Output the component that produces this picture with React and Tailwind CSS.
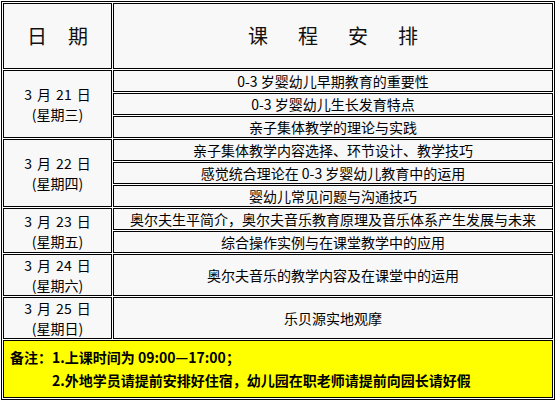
const groups = [
  {
    day: '21',
    week: '(星期三)',
    items: ['0-3 岁婴幼儿早期教育的重要性', '0-3 岁婴幼儿生长发育特点', '亲子集体教学的理论与实践'],
    h: 'h-[22px]',
  },
  {
    day: '22',
    week: '(星期四)',
    items: ['亲子集体教学内容选择、环节设计、教学技巧', '感觉统合理论在 0-3 岁婴幼儿教育中的运用', '婴幼儿常见问题与沟通技巧'],
    h: 'h-[22px]',
  },
  {
    day: '23',
    week: '(星期五)',
    items: ['奥尔夫生平简介，奥尔夫音乐教育原理及音乐体系产生发展与未来', '综合操作实例与在课堂教学中的应用'],
    h: 'h-[22px]',
  },
  {
    day: '24',
    week: '(星期六)',
    items: ['奥尔夫音乐的教学内容及在课堂中的运用'],
    h: 'h-[42px]',
  },
  {
    day: '25',
    week: '(星期日)',
    items: ['乐贝源实地观摩'],
    h: 'h-[42px]',
  },
];

const font = { fontFamily: '"Noto Sans CJK SC", "Noto Sans", sans-serif' };

export default function App() {
  return (
    <div className="bg-white w-[558px] h-[402px] pt-px pl-px" style={font}>
      <table className="w-[554px] table-fixed border-separate border-spacing-px border border-black text-[14px] text-black">
        <tbody>
          <tr>
            <td className="w-[109px] h-[66px] p-0 border border-black bg-[#f8f8f8]">
              <div className="flex justify-center gap-[21px] text-[20px] leading-none text-[#111]">
                <span>日</span>
                <span>期</span>
              </div>
            </td>
            <td className="h-[66px] p-0 border border-black bg-[#f8f8f8]">
              <div className="flex justify-center gap-[30px] text-[20px] leading-none text-[#111]">
                <span>课</span>
                <span>程</span>
                <span>安</span>
                <span>排</span>
              </div>
            </td>
          </tr>
          {groups.map((g) =>
            g.items.map((item, i) => (
              <tr key={g.day + i}>
                {i === 0 && (
                  <td
                    rowSpan={g.items.length}
                    className="p-0 border border-black bg-[#f8f8f8] text-center align-middle leading-[20px]"
                  >
                    <div className="flex justify-center gap-[5px]">
                      <span>3</span>
                      <span>月</span>
                      <span>{g.day}</span>
                      <span>日</span>
                    </div>
                    <div>{g.week}</div>
                  </td>
                )}
                <td className={`${g.h} p-0 border border-black bg-[#f8f8f8] text-center align-middle leading-[20px] whitespace-nowrap`}>
                  {item}
                </td>
              </tr>
            ))
          )}
          <tr>
            <td colSpan={2} className="h-[58px] p-0 pl-[6px] border border-black bg-[#ffff00] align-middle font-bold leading-[23px]">
              <div>备注：1.上课时间为 09:00—17:00；</div>
              <div className="pl-[42px]">2.外地学员请提前安排好住宿，幼儿园在职老师请提前向园长请好假</div>
            </td>
          </tr>
        </tbody>
      </table>
    </div>
  );
}
